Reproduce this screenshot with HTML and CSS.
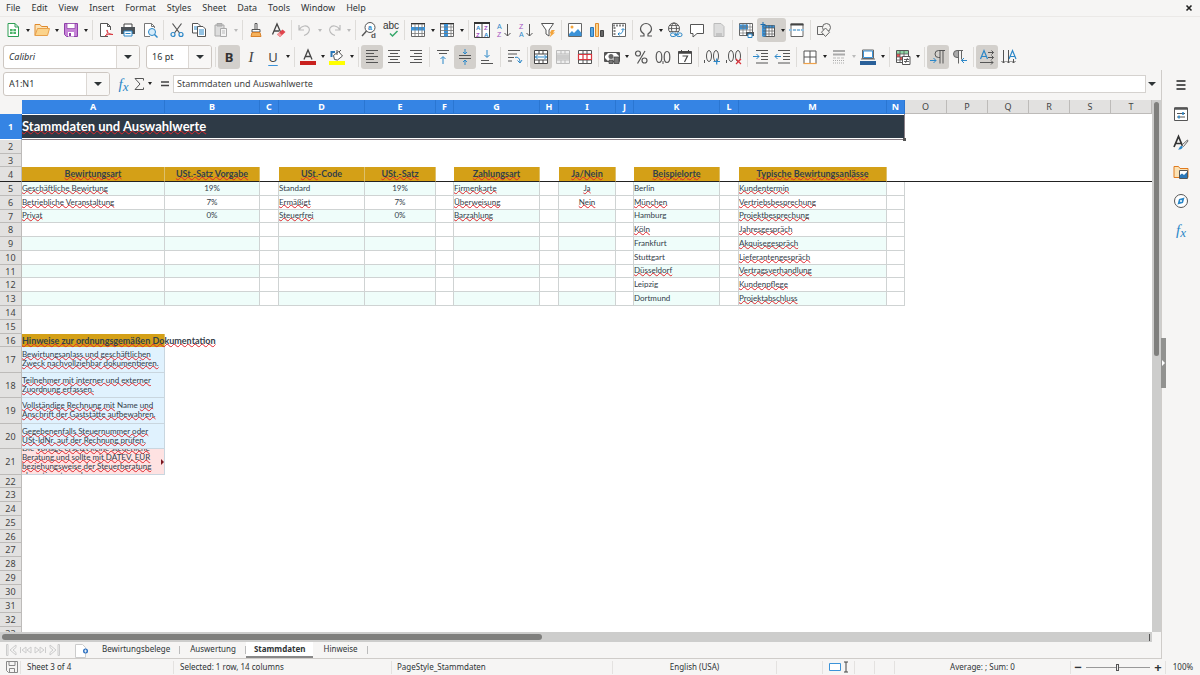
FILE: index.html
```html
<!DOCTYPE html>
<html lang="en">
<head>
<meta charset="utf-8">
<title>Stammdaten</title>
<link rel="stylesheet" href="styles.css">
</head>
<body>
<nav class="menubar">
  <button>File</button><button>Edit</button><button>View</button><button>Insert</button><button>Format</button><button>Styles</button><button>Sheet</button><button>Data</button><button>Tools</button><button>Window</button><button>Help</button>
  <button class="close" aria-label="Close"><svg viewBox="0 0 8 8" width="8" height="8"><path d="M1.500 1.500l5 5M6.500 1.500l-5 5" stroke="#222" stroke-width="1.600"/></svg></button>
</nav>

<div class="toolbar standard" role="toolbar" aria-label="Standard">
  <button class="tb" aria-label="New"><svg viewBox="0 0 16 16"><path d="M3 1.500h7l3.500 3.500v9.500H3z" fill="#fff" stroke="#2f9e55"/><path d="M10 1.500V5h3.500" stroke="#2f9e55"/><path d="M5 7h6v5H5z" fill="#4db56a"/><path d="M5 9.500h6M8 7v5" stroke="#fff" stroke-width=".7"/></svg></button><button class="dd" aria-label="New options"></button>
  <button class="tb" aria-label="Open"><svg viewBox="0 0 16 16"><path d="M1 13.500V2.500h5l1.500 2h6v3" fill="#fbe2b5" stroke="#e08a2c"/><path d="M1 13.500l2.500-7h12l-2 7z" fill="#fbd38b" stroke="#e8a04a"/></svg></button><button class="dd" aria-label="Open options"></button>
  <button class="tb" aria-label="Save"><svg viewBox="0 0 16 16"><path d="M1.500 1.500h13v13h-11l-2-2z" fill="#c583d6" stroke="#8e3fa8"/><path d="M4 1.500h8v5H4z" fill="#fff" stroke="#8e3fa8" stroke-width=".7"/><path d="M5 10h6v4.500H5z" fill="#fff"/><path d="M6 11h2v3H6z" fill="#8e3fa8"/></svg></button><button class="dd" aria-label="Save options"></button>
  <i class="sep wide"></i>
  <button class="tb" aria-label="Export as PDF"><svg viewBox="0 0 16 16"><path d="M10 14.500H2.500v-13h7l3 3V8M9.500 1.500v3h3" fill="#fff" stroke="#555"/><path d="M7 14c3-2 3-6 2-6s1 5 6 4.500c-3-1-6 0-8 1.500z" stroke="#d9363e"/></svg></button>
  <button class="tb" aria-label="Print"><svg viewBox="0 0 16 16"><path d="M4 5V2h8v3" fill="#fff" stroke="#444"/><path d="M1 5h14v7H1z" fill="#4d5358"/><path d="M4 9h8v5H4z" fill="#fff" stroke="#2b87c8"/><path d="M5.500 11.500h5" stroke="#2b87c8"/></svg></button>
  <button class="tb" aria-label="Print preview"><svg viewBox="0 0 16 16"><path d="M12.500 6V4.500l-3-3h-7v13H8M9.500 1.500v3h3" fill="#fff" stroke="#777"/><circle cx="10" cy="10" r="3.500" fill="#d6ecfa" stroke="#2b87c8"/><path d="M12.500 12.500l3 3" stroke="#2b87c8" stroke-width="1.400"/></svg></button>
  <i class="sep"></i>
  <button class="tb" aria-label="Cut"><svg viewBox="0 0 16 16"><path d="M3.500 1.500l7 9.500M12.500 1.500l-7 9.500" stroke="#555" stroke-width="1.200"/><circle cx="4" cy="12.500" r="2" stroke="#2b87c8" stroke-width="1.200"/><circle cx="12" cy="12.500" r="2" stroke="#2b87c8" stroke-width="1.200"/></svg></button>
  <button class="tb" aria-label="Copy"><svg viewBox="0 0 16 16"><path d="M1.500 1.500h5.500l2.500 2.500v7h-8z" fill="#fff" stroke="#555"/><path d="M3 5h4M3 7h4" stroke="#2b87c8"/><path d="M6.500 4.500H12l2.500 2.500v7.500h-8z" fill="#fff" stroke="#555"/><path d="M8 8h5M8 10h5M8 12h5" stroke="#2b87c8"/></svg></button>
  <button class="tb" aria-label="Paste" disabled><svg viewBox="0 0 16 16"><path d="M2 3h9v11H2z" fill="#ddd" stroke="#aaa"/><path d="M4 1.500h5v2.500H4z" fill="#bbb" stroke="#aaa"/><path d="M7.500 6.500h6v8h-6z" fill="#f4f4f4" stroke="#aaa"/><path d="M9 9h3M9 11h3" stroke="#bbb"/></svg></button><button class="dd" aria-label="Paste options" disabled></button>
  <i class="sep wide"></i>
  <button class="tb" aria-label="Clone formatting"><svg viewBox="0 0 16 16"><path d="M7 7.500v-6h2v6" fill="#fff" stroke="#555"/><path d="M4 7.500h8v2.500H4z" fill="#fff" stroke="#555"/><path d="M4 10.500h8l1 4H3z" fill="#f6b25c" stroke="#d9822b"/></svg></button>
  <button class="tb" aria-label="Clear formatting"><svg viewBox="0 0 16 16"><path d="M2.500 12.500L7 2l3.500 8M4 9h5" stroke="#444" stroke-width="1.300"/><path d="M7 12.500L12.500 7.500l3 2.500-5.500 5z" fill="#e0444c"/><path d="M7 12.500l2-2 3 2.500-2 2z" fill="#f49a9f"/></svg></button>
  <i class="sep"></i>
  <button class="tb" aria-label="Undo" disabled><svg viewBox="0 0 16 16"><path d="M2 3v5h5M2 8c3-5 8-5 10-2 1.500 3-1 6-5 7.500" stroke="#bbb" stroke-width="1.200"/></svg></button><button class="dd" aria-label="Undo options" disabled></button>
  <button class="tb" aria-label="Redo" disabled><svg viewBox="0 0 16 16"><path d="M14 3v5H9M14 8C11 3 6 3 4 6c-1.500 3 1 6 5 7.500" stroke="#bbb" stroke-width="1.200"/></svg></button><button class="dd" aria-label="Redo options" disabled></button>
  <i class="sep wide"></i>
  <button class="tb" aria-label="Find and replace"><svg viewBox="0 0 16 16"><circle cx="9" cy="5.500" r="5" fill="#fff" stroke="#555"/><path d="M5.500 9L1 14" stroke="#555" stroke-width="1.400"/><text x="7" y="7.500" font-size="7" font-weight="700" fill="#2b87c8">a</text><text x="10" y="15.500" font-size="8" font-weight="700" fill="#555">d</text></svg></button>
  <button class="tb" aria-label="Spelling"><svg viewBox="0 0 16 16"><text x="0" y="7" font-size="10" fill="#333">abc</text><path d="M7 11.500l2.500 2.500 5-5" stroke="#36a86b" stroke-width="1.500"/></svg></button>
  <i class="sep"></i>
  <button class="tb" aria-label="Row"><svg viewBox="0 0 16 16"><path d="M1.500 2h13v12.500h-13z" fill="#fff" stroke="#666"/><path d="M1 5h14v3.500H1z" fill="#3c93d8"/><path d="M5 2v12M8.500 2v12M12 2v12M2 11.500h12" stroke="#777" stroke-width=".8"/><path d="M1 1.500h14" stroke="#333"/></svg></button><button class="dd" aria-label="Row options"></button>
  <button class="tb" aria-label="Column"><svg viewBox="0 0 16 16"><path d="M1.500 2h13v12.500h-13z" fill="#fff" stroke="#666"/><path d="M5 2h4v12.500H5z" fill="#3c93d8"/><path d="M2 5h12M2 8.500h12M2 11.500h12M12 2v12" stroke="#777" stroke-width=".8"/><path d="M1 1.500h14" stroke="#333"/></svg></button><button class="dd" aria-label="Column options"></button>
  <i class="sep wide"></i>
  <button class="tb" aria-label="Sort"><svg viewBox="0 0 16 16"><path d="M.5 1.500h15v14H.5zM8 2v13" fill="#fff" stroke="#444"/><path d="M0 1h16" stroke="#333" stroke-width="2"/><g font-size="6" font-weight="700"><text x="2" y="7.500" fill="#2b87c8">A</text><text x="2" y="14.500" fill="#a24fc0">Z</text><text x="10" y="7.500" fill="#a24fc0">Z</text><text x="10" y="14.500" fill="#2b87c8">A</text></g></svg></button>
  <button class="tb" aria-label="Sort ascending"><svg viewBox="0 0 16 16"><g font-size="7"><text x="1" y="7" fill="#2b87c8" stroke="#2b87c8">A</text><text x="1" y="15" fill="#a24fc0">Z</text></g><path d="M11.500 2v12M8.500 11l3 3 3-3" stroke="#555"/></svg></button>
  <button class="tb" aria-label="Sort descending"><svg viewBox="0 0 16 16"><g font-size="7"><text x="1" y="7" fill="#a24fc0">Z</text><text x="1" y="15" fill="#2b87c8">A</text></g><path d="M11.500 2v12M8.500 11l3 3 3-3" stroke="#555"/></svg></button>
  <button class="tb" aria-label="AutoFilter"><svg viewBox="0 0 16 16"><path d="M1.500 1.500h12L9 8v6l-3-2V8z" fill="#fff" stroke="#555"/><path d="M11.500 8H15l-2 2.500h2L9.500 15.500l1.500-4H9.500z" fill="#f3a43b"/></svg></button>
  <i class="sep"></i>
  <button class="tb" aria-label="Insert image"><svg viewBox="0 0 16 16"><path d="M1.500 1.500h13v13h-13z" fill="#fff" stroke="#666"/><circle cx="5" cy="5" r="1.500" fill="#f3a43b"/><path d="M2 14v-2l3-3 2 2 4-4 3.500 4v3z" fill="#3c93d8"/></svg></button>
  <button class="tb" aria-label="Insert chart"><svg viewBox="0 0 16 16"><path d="M1.500 5.500h3v9h-3z" fill="#57a8e2" stroke="#2b77b8"/><path d="M6.500 1.500h3v13h-3z" fill="#fbd38b" stroke="#e08a2c"/><path d="M11.500 8.500h3v6h-3z" fill="#666" stroke="#444"/></svg></button>
  <button class="tb" aria-label="Insert pivot table"><svg viewBox="0 0 16 16"><path d="M1.500 1.500h13v13h-13z" fill="#fff" stroke="#666"/><path d="M2 3.500h12M3.500 5v9" stroke="#888" stroke-width="2" stroke-dasharray="2 1"/><path d="M7 12c4 0 5-2 5-5M10.500 8L12 6.500 13.500 8M8.500 10.500L7 12l1.500 1.500" stroke="#2b87c8"/></svg></button>
  <i class="sep"></i>
  <button class="tb" aria-label="Special character"><svg viewBox="0 0 16 16"><path d="M2 14h4v-2C3.500 10.500 2.500 8.500 2.500 7a5.500 5.500 0 0 1 11 0c0 1.500-1 3.500-3.500 5v2h4" stroke="#555" stroke-width="1.200"/></svg></button><button class="dd" aria-label="Special character options"></button>
  <button class="tb" aria-label="Insert hyperlink"><svg viewBox="0 0 16 16"><circle cx="7" cy="6.500" r="5.500" stroke="#555"/><ellipse cx="7" cy="6.500" rx="2.500" ry="5.500" stroke="#555"/><path d="M1.500 6.500h11M2.500 3.500h9M2.500 9.500h9" stroke="#555" stroke-width=".8"/><path d="M3 10.500h13v5H3z" fill="#f5f4f2"/><rect x="3.500" y="11" width="5.500" height="3.500" rx="1.700" stroke="#2b87c8"/><rect x="9.500" y="11" width="5.500" height="3.500" rx="1.700" stroke="#2b87c8"/><path d="M7 12.700h5" stroke="#2b87c8"/></svg></button>
  <button class="tb" aria-label="Insert comment"><svg viewBox="0 0 16 16"><path d="M1.500 2.500h13v9H8l-4 3.500v-3.500H1.500z" fill="#fff" stroke="#555"/></svg></button>
  <button class="tb" aria-label="Headers and footers" disabled><svg viewBox="0 0 16 16"><path d="M3 1.500h7l3 3v10H3z" fill="#ddd" stroke="#bbb"/><path d="M5 11h6v3H5z" fill="#c4c4c4"/></svg></button>
  <i class="sep"></i>
  <button class="tb" aria-label="Define print area"><svg viewBox="0 0 16 16"><path d="M1.500 1.500h13v12h-13z" fill="#fff" stroke="#666"/><path d="M1.500 2.500H10v5H1.500z" fill="#3c93d8"/><path d="M5 2v11M8.500 2v11M12 2v11M2 5h12M2 8h12M2 11h12" stroke="#777" stroke-width=".7"/><path d="M8 10h8v4H8z" fill="#4d5358"/><path d="M10 12h4v3.500h-4z" fill="#fff" stroke="#2b87c8"/></svg></button>
  <span class="split on"><button class="tb" aria-label="Freeze rows and columns"><svg viewBox="0 0 16 16"><path d="M3.500 3.500h11v11h-11z" fill="#fff" stroke="#555"/><path d="M2 3.500h12.500V6H6v8.500H2z" fill="#3c93d8"/><path d="M6 3v12M9 3v12M12 3v12M3 6h12M3 9h12M3 12h12" stroke="#555" stroke-width=".7"/><path d="M3 0v5M.5 2.500h5" stroke="#1b6fb3"/></svg></button><button class="dd" aria-label="Freeze options"></button></span>
  <button class="tb" aria-label="Split window"><svg viewBox="0 0 16 16"><path d="M2 7V2h12v5M2 9v5.500h12V9" fill="#fff" stroke="#666"/><path d="M1.500 2.500h13" stroke="#444" stroke-width="2"/><path d="M0 8h16" stroke="#2b87c8" stroke-dasharray="3 1"/></svg></button>
  <i class="sep"></i>
  <button class="tb" aria-label="Show draw functions"><svg viewBox="0 0 16 16"><path d="M1.500 4.500h8v8h-8z" fill="#f5f4f2" stroke="#666"/><circle cx="10.500" cy="5.500" r="4" fill="#f5f4f2" stroke="#666"/><path d="M9.500 6l4 4.200-4 4.300-4-4.300z" fill="#f5f4f2" stroke="#666"/></svg></button>
</div>

<div class="toolbar formatting" role="toolbar" aria-label="Formatting">
  <span class="combo font"><input aria-label="Font name" value="Calibri"><button aria-label="Font list"></button></span>
  <span class="combo size"><input aria-label="Font size" value="16 pt"><button aria-label="Size list"></button></span>
  <i class="sep wide"></i>
  <button class="tb on letter bold">B</button>
  <button class="tb letter italic">I</button>
  <button class="tb letter under">U</button><button class="dd" aria-label="Underline options"></button>
  <i class="sep wide"></i>
  <button class="tb" aria-label="Font color"><svg viewBox="0 0 16 16"><path d="M4 10.500L8 1l4 9.500M5.500 7.500h5" stroke="#444" stroke-width="1.300"/><path d="M0 12h16v4H0z" fill="#c9211e"/></svg></button><button class="dd" aria-label="Font color options"></button>
  <button class="tb" aria-label="Highlighting"><svg viewBox="0 0 16 16"><path d="M4.500 6.500l5-4 4 4.500-5 4-3-.5z" fill="#fff" stroke="#555"/><path d="M2.500 8V3H6" stroke="#2b77b8" stroke-width="2"/><path d="M8 1v5M12 1l-2 2" stroke="#555"/><path d="M0 12h16v4H0z" fill="#ff0"/></svg></button><button class="dd" aria-label="Highlighting options"></button>
  <i class="sep wide"></i>
  <button class="tb on" aria-label="Align left"><svg viewBox="0 0 16 16"><path d="M2 1.500h12M2 4.500h8M2 7.500h12M2 10.500h8M2 13.500h12" stroke="#555"/></svg></button>
  <button class="tb" aria-label="Center"><svg viewBox="0 0 16 16"><path d="M2 1.500h12M4 4.500h8M2 7.500h12M4 10.500h8M2 13.500h12" stroke="#555"/></svg></button>
  <button class="tb" aria-label="Align right"><svg viewBox="0 0 16 16"><path d="M2 1.500h12M6 4.500h8M2 7.500h12M6 10.500h8M2 13.500h12" stroke="#555"/></svg></button>
  <i class="sep"></i>
  <button class="tb" aria-label="Align top"><svg viewBox="0 0 16 16"><path d="M2 1.500h12M4 4.500h8" stroke="#555"/><path d="M8 15V8M5.500 10L8 7.500l2.500 2.500" stroke="#2b87c8"/></svg></button>
  <button class="tb on" aria-label="Center vertically"><svg viewBox="0 0 16 16"><path d="M2 6.500h12M2 9.500h12" stroke="#555"/><path d="M8 0v5M6 3l2 2 2-2M8 16v-5M6 13l2-2 2 2" stroke="#2b87c8"/></svg></button>
  <button class="tb" aria-label="Align bottom"><svg viewBox="0 0 16 16"><path d="M2 11.500h8M2 14.500h12" stroke="#555"/><path d="M8 1v7M5.500 6L8 8.500 10.500 6" stroke="#2b87c8"/></svg></button>
  <i class="sep"></i>
  <button class="tb" aria-label="Wrap text"><svg viewBox="0 0 16 16"><path d="M2 1.500h12M2 5h9M2 8.500h6M2 12h4" stroke="#555"/><path d="M9 8.500c3-1 5 1 5 5M11.500 11.500l2.500 2.500 2-3" stroke="#2b87c8"/></svg></button>
  <i class="sep"></i>
  <button class="tb on" aria-label="Merge and center"><svg viewBox="0 0 16 16"><path d="M1.500 1.500h13v13h-13zM1.500 5h13M1.500 11h13M6 2v3M10 2v3M6 11v3M10 11v3" fill="#fff" stroke="#444"/><path d="M2 8h12M4.500 6L2.500 8l2 2M11.500 6l2 2-2 2" stroke="#2b87c8"/></svg></button>
  <button class="tb" aria-label="Merge cells" disabled><svg viewBox="0 0 16 16"><path d="M1.500 1.500h13v13h-13zM1.500 5h13M1.500 11h13M6 2v3M10 2v3M6 11v3M10 11v3" fill="#eee" stroke="#bbb"/><path d="M2 6h12v4.500H2z" fill="#ccc"/></svg></button>
  <button class="tb" aria-label="Split cells"><svg viewBox="0 0 16 16"><path d="M1.500 1.500h13v13h-13zM1.500 5h13M1.500 11h13M6 2v3M10 2v3M6 11v3M10 11v3" fill="#fff" stroke="#555"/><path d="M1.500 5.500h13v5h-13zM6 5v6M10 5v6" stroke="#d9363e" stroke-width="1.200"/></svg></button>
  <i class="sep"></i>
  <button class="tb" aria-label="Format as currency"><svg viewBox="0 0 16 16"><path d="M.5 3.500h15v9H.5z" fill="#fff" stroke="#555"/><path d="M1 4l3 0-3 3zM15 4v3l-3-3zM1 12V9l3 3z" fill="#555"/><circle cx="7" cy="7.500" r="2.500" fill="#666"/><path d="M5 11h4v3.500H5zM10 8h5v6.500h-5z" fill="#777" stroke="#444" stroke-width=".8"/></svg></button><button class="dd" aria-label="Currency options"></button>
  <button class="tb" aria-label="Format as percent"><svg viewBox="0 0 16 16"><circle cx="5" cy="4.500" r="2.500" stroke="#555" stroke-width="1.200"/><circle cx="11.500" cy="11.500" r="2.500" stroke="#555" stroke-width="1.200"/><path d="M12 2L4.500 14.500" stroke="#555" stroke-width="1.200"/></svg></button>
  <button class="tb" aria-label="Format as number"><svg viewBox="0 0 16 16"><ellipse cx="4" cy="8" rx="2.800" ry="5.500" stroke="#555" stroke-width="1.200"/><ellipse cx="12" cy="8" rx="2.800" ry="5.500" stroke="#555" stroke-width="1.200"/><path d="M8 12v3" stroke="#555"/></svg></button>
  <button class="tb" aria-label="Format as date"><svg viewBox="0 0 16 16"><path d="M1.500 2.500h13v12h-13z" fill="#fff" stroke="#555"/><path d="M1.500 3.500h13" stroke="#444" stroke-width="2.500"/><path d="M4.500 1v2M11.500 1v2" stroke="#444"/><path d="M5.500 7h5l-3 6" stroke="#444" stroke-width="1.200"/></svg></button>
  <i class="sep"></i>
  <button class="tb" aria-label="Add decimal place"><svg viewBox="0 0 16 16"><path d="M.5 11v3" stroke="#555"/><ellipse cx="5" cy="7" rx="2.500" ry="5.500" stroke="#555"/><ellipse cx="12" cy="7" rx="2.500" ry="5.500" stroke="#555"/><path d="M9.500 12.500H16M12.700 9.500v6" stroke="#2b87c8" stroke-width="1.200"/></svg></button>
  <button class="tb" aria-label="Delete decimal place"><svg viewBox="0 0 16 16"><path d="M.5 11v3" stroke="#555"/><ellipse cx="5" cy="7" rx="2.500" ry="5.500" stroke="#555"/><ellipse cx="12" cy="7" rx="2.500" ry="5.500" stroke="#555"/><path d="M10 10l5 5M15 10l-5 5" stroke="#d9363e" stroke-width="1.200"/></svg></button>
  <i class="sep"></i>
  <button class="tb" aria-label="Increase indent"><svg viewBox="0 0 16 16"><path d="M3 1.500h12M8 4.500h7M8 7.500h7M8 10.500h7M3 14h12" stroke="#555"/><path d="M0 7.500h6M3.500 5L6 7.500 3.500 10" stroke="#2b87c8"/></svg></button>
  <button class="tb" aria-label="Decrease indent"><svg viewBox="0 0 16 16"><path d="M3 1.500h12M8 4.500h7M8 7.500h7M8 10.500h7M3 14h12" stroke="#555"/><path d="M0 7.500h6M2.500 5L0 7.500 2.500 10" stroke="#2b87c8"/></svg></button>
  <i class="sep"></i>
  <button class="tb" aria-label="Borders"><svg viewBox="0 0 16 16"><path d="M2 2h12v12.500H2z" fill="#fff" stroke="#555"/><path d="M8 2v12M2 8h12" stroke="#555"/><path d="M1.500 14.500h13" stroke="#f0a24a" stroke-width="1.200"/></svg></button><button class="dd" aria-label="Border options"></button>
  <button class="tb" aria-label="Border style" disabled><svg viewBox="0 0 16 16"><path d="M2 2h12M2 5.500h12" stroke="#aaa" stroke-width="2"/><path d="M2 9h12" stroke="#bbb" stroke-dasharray="3 1"/><path d="M2 11.500h12M2 14h12" stroke="#aaa" stroke-dasharray="1 1"/></svg></button><button class="dd" aria-label="Border style options" disabled></button>
  <button class="tb" aria-label="Border color"><svg viewBox="0 0 16 16"><path d="M2.500 1h11v8.500h-11z" fill="#fff" stroke="#666"/><path d="M3.500 2h9v6.500h-9z" stroke="#3c93d8"/><path d="M1 10h14" stroke="#666"/><path d="M0 12h16v4H0z" fill="#2a6099"/></svg></button><button class="dd" aria-label="Border color options"></button>
  <i class="sep wide"></i>
  <button class="tb" aria-label="Conditional formatting"><svg viewBox="0 0 16 16"><path d="M1.500 1.500h12v12h-12z" fill="#fff" stroke="#555"/><path d="M2 2h11v3H2z" fill="#8fd6a4"/><path d="M2 5h3v3H2zM5 8h3v3H5z" fill="#e55"/><path d="M5 2v11M9 2v11M2 5h12M2 8h12M2 11h6" stroke="#555" stroke-width=".8"/><path d="M7.500 7.500h7.500v8H7.500z" fill="#fff" stroke="#555"/><path d="M9 10.500h5M9 12.500h5M12.500 9l-2 5" stroke="#444" stroke-width=".8"/></svg></button><button class="dd" aria-label="Conditional options"></button>
  <i class="sep wide"></i>
  <button class="tb on" aria-label="Left to right"><svg viewBox="0 0 16 16"><path d="M15 1.500H8.500a3.500 3.500 0 0 0 0 7H10M10 1.500v13M13 1.500v13" stroke="#555"/><path d="M0 11.500h6M3.500 9L6 11.500 3.500 14" stroke="#2b87c8"/></svg></button>
  <button class="tb" aria-label="Right to left"><svg viewBox="0 0 16 16"><path d="M7 1.500H5a3.500 3.500 0 0 0 0 7h2z" fill="#aaa"/><path d="M11 1.500H5a3.500 3.500 0 0 0 0 7h1.500M6.500 1.500v13M9.500 1.500v9" stroke="#666"/><path d="M9.500 11.500H15M12 9l-2.500 2.500L12 14" stroke="#2b87c8"/></svg></button>
  <i class="sep"></i>
  <button class="tb on" aria-label="Text left to right"><svg viewBox="0 0 16 16"><path d="M1.500 10L5 1.500 8.500 10M2.700 7.500h4.600" stroke="#2b87c8" stroke-width="1.200"/><path d="M9 3.500h5.500M9 8.500h5.500M1 13.500h13M12.500 1.500l2 2-2 2M12.500 6.500l2 2-2 2M12 11.500l2 2-2 2" stroke="#555"/></svg></button>
  <button class="tb" aria-label="Text top to bottom"><svg viewBox="0 0 16 16"><path d="M8 10l3.500-8.500L15 10M9.200 7.500h4.600" stroke="#2b87c8" stroke-width="1.200"/><path d="M2.500 1v13M7.500 1v13M12.500 10v4M.5 12l2 2 2-2M5.500 12l2 2 2-2M10.500 12l2 2 2-2" stroke="#555"/></svg></button>
</div>

<div class="workspace">
  <main class="main">
    <div class="formulabar">
      <span class="combo namebox"><input aria-label="Name box" value="A1:N1"><button aria-label="Name list"></button></span>
      <button class="fb fx" aria-label="Function wizard">f<sub>x</sub></button>
      <button class="fb" aria-label="Select function"><svg viewBox="0 0 12 16" width="12" height="16"><path d="M10.500 4.500V2.500H2L7 8l-5 5.500h8.500v-2" stroke="#555"/></svg></button><button class="dd" aria-label="Function options"></button>
      <button class="fb eq" aria-label="Formula"><svg viewBox="0 0 10 8" width="10" height="8"><path d="M1 2h8M1 5.500h8" stroke="#444" stroke-width="1.400"/></svg></button>
      <input class="formula" aria-label="Formula input" value="Stammdaten und Auswahlwerte">
      <button class="arrow" aria-label="Expand formula bar"></button>
    </div>
    <div class="viewport">
      <div class="gridwrap">
        <table class="grid">
          <colgroup><col class="w22"><col class="w143"><col class="w95"><col class="w19"><col class="w86"><col class="w71"><col class="w18"><col class="w86"><col class="w19"><col class="w57"><col class="w18"><col class="w86"><col class="w19"><col class="w148"><col class="w18"><col class="w42"><col class="w41"><col class="w41"><col class="w41"><col class="w41"><col class="w41"></colgroup>
          <thead>
            <tr class="h14"><td class="corner"></td><th class="sel">A</th><th class="sel">B</th><th class="sel">C</th><th class="sel">D</th><th class="sel">E</th><th class="sel">F</th><th class="sel">G</th><th class="sel">H</th><th class="sel">I</th><th class="sel">J</th><th class="sel">K</th><th class="sel">L</th><th class="sel">M</th><th class="sel">N</th><th>O</th><th>P</th><th>Q</th><th>R</th><th>S</th><th>T</th></tr>
          </thead>
          <tbody>
            <tr class="h26"><th class="sel">1</th><td class="title" colspan="14"><span class="sp">Stammdaten und Auswahlwerte</span></td><td colspan="6"></td></tr>
            <tr class="h14"><th>2</th><td colspan="20"></td></tr>
            <tr class="h13"><th>3</th><td colspan="20"></td></tr>
            <tr class="h15 frozen"><th>4</th><td class="hd"><span class="sp">Bewirtungsart</span></td><td class="hd"><span class="sp">USt.-Satz Vorgabe</span></td><td></td><td class="hd"><span class="sp">USt.</span>-Code</td><td class="hd"><span class="sp">USt.-Satz</span></td><td></td><td class="hd"><span class="sp">Zahlungsart</span></td><td></td><td class="hd"><span class="sp">Ja/Nein</span></td><td></td><td class="hd"><span class="sp">Beispielorte</span></td><td></td><td class="hd"><span class="sp">Typische Bewirtungsanlässe</span></td><td></td><td colspan="6"></td></tr>
            <tr class="h14 data odd"><th>5</th><td><span class="sp">Geschäftliche Bewirtung</span></td><td>19%</td><td></td><td>Standard</td><td>19%</td><td></td><td><span class="sp">Firmenkarte</span></td><td></td><td><span class="sp">Ja</span></td><td></td><td>Berlin</td><td></td><td><span class="sp">Kundentermin</span></td><td></td></tr>
            <tr class="h14 data"><th>6</th><td><span class="sp">Betriebliche Veranstaltung</span></td><td>7%</td><td></td><td><span class="sp">Ermäßigt</span></td><td>7%</td><td></td><td><span class="sp">Überweisung</span></td><td></td><td><span class="sp">Nein</span></td><td></td><td><span class="sp">München</span></td><td></td><td><span class="sp">Vertriebsbesprechung</span></td><td></td></tr>
            <tr class="h13 data odd"><th>7</th><td><span class="sp">Privat</span></td><td>0%</td><td></td><td><span class="sp">Steuerfrei</span></td><td>0%</td><td></td><td><span class="sp">Barzahlung</span></td><td></td><td></td><td></td><td>Hamburg</td><td></td><td><span class="sp">Projektbesprechung</span></td><td></td></tr>
            <tr class="h14 data"><th>8</th><td></td><td></td><td></td><td></td><td></td><td></td><td></td><td></td><td></td><td></td><td><span class="sp">Köln</span></td><td></td><td><span class="sp">Jahresgespräch</span></td><td></td></tr>
            <tr class="h14 data odd"><th>9</th><td></td><td></td><td></td><td></td><td></td><td></td><td></td><td></td><td></td><td></td><td>Frankfurt</td><td></td><td><span class="sp">Akquisegespräch</span></td><td></td></tr>
            <tr class="h14 data"><th>10</th><td></td><td></td><td></td><td></td><td></td><td></td><td></td><td></td><td></td><td></td><td>Stuttgart</td><td></td><td><span class="sp">Lieferantengespräch</span></td><td></td></tr>
            <tr class="h13 data odd"><th>11</th><td></td><td></td><td></td><td></td><td></td><td></td><td></td><td></td><td></td><td></td><td><span class="sp">Düsseldorf</span></td><td></td><td><span class="sp">Vertragsverhandlung</span></td><td></td></tr>
            <tr class="h14 data"><th>12</th><td></td><td></td><td></td><td></td><td></td><td></td><td></td><td></td><td></td><td></td><td>Leipzig</td><td></td><td><span class="sp">Kundenpflege</span></td><td></td></tr>
            <tr class="h14 data odd"><th>13</th><td></td><td></td><td></td><td></td><td></td><td></td><td></td><td></td><td></td><td></td><td>Dortmund</td><td></td><td><span class="sp">Projektabschluss</span></td><td></td></tr>
            <tr class="h14"><th>14</th><td colspan="20"></td></tr>
            <tr class="h14"><th>15</th><td colspan="20"></td></tr>
            <tr class="h13"><th>16</th><td class="hd spill"><span class="sp">Hinweise zur ordnungsgemäßen Dokumentation</span></td></tr>
            <tr class="h26"><th>17</th><td class="note"><span class="sp">Bewirtungsanlass und geschäftlichen<br>Zweck nachvollziehbar dokumentieren.</span></td></tr>
            <tr class="h25"><th>18</th><td class="note"><span class="sp">Teilnehmer mit interner und externer<br>Zuordnung erfassen.</span></td></tr>
            <tr class="h26"><th>19</th><td class="note"><span class="sp">Vollständige Rechnung mit</span> Name <span class="sp">und<br>Anschrift der Gaststätte aufbewahren.</span></td></tr>
            <tr class="h25"><th>20</th><td class="note"><span class="sp">Gegebenenfalls Steuernummer oder<br>USt-IdNr. auf der Rechnung prüfen.</span></td></tr>
            <tr class="h26"><th>21</th><td class="note warn"><div class="clip"><p>Die <span class="sp">Vorlage ersetzt keine steuerliche<br>Beratung und sollte mit DATEV, EÜR<br>beziehungsweise der Steuerberatung<br>abgestimmt werden.</span></p></div></td></tr>
            <tr class="h13"><th>22</th></tr>
            <tr class="h14"><th>23</th></tr>
            <tr class="h14"><th>24</th></tr>
            <tr class="h14"><th>25</th></tr>
            <tr class="h13"><th>26</th></tr>
            <tr class="h14"><th>27</th></tr>
            <tr class="h14"><th>28</th></tr>
            <tr class="h14"><th>29</th></tr>
            <tr class="h14"><th>30</th></tr>
            <tr class="h14"><th>31</th></tr>
            <tr class="h14"><th>32</th></tr>
            <tr class="h14"><th>33</th></tr>
          </tbody>
        </table>
      </div>
      <div class="vscroll"><div class="thumb"></div></div>
      <div class="hscroll"><div class="thumb"></div></div>
    </div>
    <div class="tabs">
      <span class="tabnav">
        <button aria-label="First sheet"><svg viewBox="0 0 14 14" width="14" height="14"><path d="M1.500 1.500h1.500v11H1.500zM11 2L5 7l6 5V9.500L8 7l3-2.500z" stroke="#ccc"/></svg></button>
        <button aria-label="Previous sheet"><svg viewBox="0 0 14 14" width="14" height="14"><path d="M1.500 4v6M7 4L3 7l4 3zM12 4L8 7l4 3z" stroke="#ccc"/></svg></button>
        <button aria-label="Next sheet"><svg viewBox="0 0 14 14" width="14" height="14"><path d="M2 4l4 3-4 3zM7 4l4 3-4 3zM12.500 4v6" stroke="#ccc"/></svg></button>
        <button aria-label="Last sheet"><svg viewBox="0 0 14 14" width="14" height="14"><path d="M11 1.500h1.500v11H11zM3 2l6 5-6 5V9.500L6 7 3 4.500z" stroke="#ccc"/></svg></button>
      </span>
      <button class="addsheet" aria-label="Add sheet"><svg viewBox="0 0 14 14" width="14" height="14"><path d="M.5 .5h7l3 3v10H.5z" fill="#fff" stroke="#ccc"/><circle cx="10.500" cy="7" r="2.500" fill="#2a6fc0"/><path d="M9 7h3M10.500 5.500v3" stroke="#fff" stroke-width=".8"/></svg></button>
      <button class="tab">Bewirtungsbelege</button><button class="tab">Auswertung</button><button class="tab active">Stammdaten</button><button class="tab">Hinweise</button>
    </div>
  </main>
  <aside class="sidebar">
    <button aria-label="Sidebar settings"><svg viewBox="0 0 16 16"><path d="M3.500 4h9M3.500 8h9M3.500 12h9" stroke="#222" stroke-width="1.400"/></svg></button>
    <button aria-label="Properties"><svg viewBox="0 0 16 16"><path d="M1.500 2h13v12.500h-13z" fill="#fff" stroke="#555"/><path d="M1.500 2.500h13" stroke="#555" stroke-width="2.500"/><path d="M4 7.500h8M4 11h8" stroke="#555"/><path d="M10 6v3M6 9.500v3" stroke="#2b87c8" stroke-width="1.500"/></svg></button>
    <button aria-label="Styles"><svg viewBox="0 0 16 16"><path d="M1 12L5.500 1.500 9.500 11M2.500 8.500h6" stroke="#333" stroke-width="1.700"/><path d="M14.500 5L9 10l1.500 1.500L15 6z" fill="#fff" stroke="#666"/><path d="M4 14.500c3 0 2-4 5-3.500 2 1 0 4-5 3.500z" fill="#2b87c8"/></svg></button>
    <button aria-label="Gallery"><svg viewBox="0 0 16 16"><path d="M1 13.500V2.500h4.500l1.500 2h8v9z" fill="#fbe2b5" stroke="#e07b1f"/><path d="M6.500 6.500h8v8h-8z" fill="#fff" stroke="#555"/><path d="M7 14v-3l2-1.500 2 1.500 3-3v6z" fill="#2b77b8"/></svg></button>
    <button aria-label="Navigator"><svg viewBox="0 0 16 16"><circle cx="8" cy="8" r="6.500" fill="#fff" stroke="#555"/><path d="M11.500 4.500l-1.500 5.500-5.500 1.500L6 6z" fill="#2b87c8"/><circle cx="8" cy="8" r="1" fill="#fff"/></svg></button>
    <button class="fx" aria-label="Functions">f<sub>x</sub></button>
    <button class="handle" aria-label="Hide sidebar"></button>
  </aside>
</div>

<footer class="status">
  <span class="s-doc"><svg viewBox="0 0 12 12" width="12" height="12"><path d="M.5 .5h11v11h-9l-2-2zM3 .5v4h6v-4M3.500 11.500v-4h5v4" stroke="#888"/></svg></span>
  <span class="s-sheet">Sheet 3 of 4</span>
  <span class="s-sel">Selected: 1 row, 14 columns</span>
  <span class="s-page">PageStyle_Stammdaten</span>
  <span class="s-lang">English (USA)</span>
  <span class="s-mode"></span>
  <span class="s-box"><svg viewBox="0 0 20 12" width="20" height="12"><path d="M.5 2.500h11v7H.5z" fill="#fff" stroke="#3c93d8"/><path d="M15 1h4M17 1v10M15 11h4" stroke="#444"/></svg></span>
  <span class="s-gap"></span>
  <span class="s-gap"></span>
  <span class="s-sum">Average: ; Sum: 0</span>
  <span class="s-zoom"><button aria-label="Zoom out">−</button><input type="range" aria-label="Zoom" min="0" max="100" value="49"><button aria-label="Zoom in">+</button></span>
  <span class="s-pct">100%</span>
</footer>
</body>
</html>
```
FILE: styles.css
```css
* { box-sizing: border-box; }
body {
  margin: 0;
  height: 100vh;
  display: flex;
  flex-direction: column;
  overflow: hidden;
  background: #f6f5f4;
  color: #2e3436;
  font: 9px/12px "Noto Sans", "Open Sans", sans-serif;
}
button, input { font: inherit; color: inherit; margin: 0; padding: 0; border: 0; background: none; }
svg { display: block; fill: none; overflow: visible; }
svg text { font-family: "Liberation Sans", sans-serif; stroke: none; }

.menubar { display: flex; flex: none; align-items: center; height: 17px; padding: 0 7px 0 6px; gap: 11px; border-bottom: 1px solid #ebe9e7; }
.close { margin-left: auto; }

.toolbar { display: flex; align-items: center; height: 27px; flex: none; }
.standard { padding-left: 2px; height: 26px; }
.formatting { padding-left: 3px; }
.tb { flex: none; width: 22px; height: 24px; display: flex; align-items: center; justify-content: center; border-radius: 3px; }
.tb svg { width: 16px; height: 16px; }
.on { background: #d3d0cc; }
.split { display: flex; align-items: center; border-radius: 3px; }
.dd { flex: none; width: 7px; height: 24px; display: flex; align-items: center; justify-content: center; }
.dd::before { content: ""; border: 2px solid transparent; border-top: 3px solid #222; border-bottom: 0; }
.dd:disabled::before { border-top-color: #bbb; }
.sep { flex: none; width: 5px; height: 20px; background: linear-gradient(#dedcd9, #dedcd9) center / 1px 100% no-repeat; }
.wide { width: 6px; }
.letter { font-size: 13px; color: #444; }
.bold { font-weight: 700; color: #333; }
.italic { font-family: "Liberation Serif", serif; font-style: italic; font-size: 15px; }
.under { text-decoration: underline #3c93d8 1px; text-underline-offset: 3px; }

.combo { display: flex; flex: none; height: 24px; border: 1px solid #cdc7c2; border-radius: 3px; background: #fff; overflow: hidden; }
.combo input { flex: 1; min-width: 0; padding-left: 5px; }
.combo button { width: 23px; border-left: 1px solid #dcd8d4; background: #f8f7f6; display: flex; align-items: center; justify-content: center; }
.combo button::before, .arrow::before { content: ""; border: 4px solid transparent; border-top-color: #2e3436; border-bottom: 0; }
.font { width: 137px; margin-right: 6px; }
.font input { font-style: italic; }
.size { width: 66px; }

.workspace { flex: 1; display: flex; min-height: 0; }
.main { flex: 1; min-width: 0; display: flex; flex-direction: column; }
.formulabar { flex: none; height: 30px; padding: 1px 4px 4px 3px; display: flex; align-items: center; }
.namebox { width: 107px; margin-right: 6px; }
.fb { width: 15px; display: flex; justify-content: center; align-items: center; }
.fx { font: italic 15px/16px "Liberation Serif", serif; color: #2b87c8; display: block; }
.fx sub { font-size: 13px; line-height: 1px; vertical-align: -2px; }
.eq { margin: 0 1px 0 4px; }
.formula { flex: 1; min-width: 0; height: 18px; border: 1px solid #d5d2cf; background: #fff; padding: 0 4px 0 3px; color: #444; }
.arrow { width: 11px; display: flex; justify-content: center; }

.viewport { flex: 1; min-height: 0; display: grid; grid-template-columns: minmax(0, 1fr) 9px; grid-template-rows: minmax(0, 1fr) 10px; }
.gridwrap { overflow: hidden; background: #fff; }
.grid { width: 1152px; table-layout: fixed; border-collapse: separate; border-spacing: 0; font: 8px/9px Lato, sans-serif; color: #33404a; }
.grid th { padding: 0; background: #e2e1e0; border: solid #bdbbb9; border-width: 0 1px 1px 0; font: 9px/11px "Noto Sans", sans-serif; color: #444; text-align: center; }
.grid th.sel { background: #3584e4; border-color: #2a76d2; color: #fff; font-weight: 700; }
.grid tbody th.sel { border-bottom-color: #fff; }
.grid td { padding: 0 0 1px; white-space: nowrap; overflow: hidden; }
.grid .corner { background: #f6f5f4; }
.w18 { width: 18px; } .w19 { width: 19px; } .w22 { width: 22px; } .w41 { width: 41px; } .w42 { width: 42px; }
.w57 { width: 57px; } .w71 { width: 71px; } .w86 { width: 86px; } .w95 { width: 95px; } .w143 { width: 143px; } .w148 { width: 148px; }
.h13 { height: 13px; } .h14 { height: 14px; } .h15 { height: 15px; } .h25 { height: 25px; } .h26 { height: 26px; }
.grid .title { position: relative; overflow: visible; background: #2e3a46; color: #fff; font-size: 13px; line-height: 18px; font-weight: 700; border: solid #8a7f86; border-width: 0 1px 1px 0; box-shadow: inset 0 -1px #fff, inset 0 1px #fff; }
.title::after { content: ""; position: absolute; right: -2px; bottom: -2px; width: 3px; height: 3px; background: #555; }
.grid .hd { background: #d4a017; border-right: 1px solid #ddc06b; text-align: center; font-size: 9px; font-weight: 700; }
.grid .spill { text-align: left; overflow: visible; }
.frozen > * { border-bottom: 1px solid #222 !important; }
.data td { border: solid #cfd3d3; border-width: 0 1px 1px 0; }
.data td:nth-of-type(2), .data td:nth-of-type(5), .data td:nth-of-type(9) { text-align: center; }
.odd td { background: #effdfa; }
.odd td:nth-of-type(3), .odd td:nth-of-type(6), .odd td:nth-of-type(8), .odd td:nth-of-type(10), .odd td:nth-of-type(12), .odd td:nth-of-type(14) { background: #fff; }
.grid .note { background: #e0f2fe; border: solid #c9d6df; border-width: 0 1px 1px 0; }
.grid .warn { background: #fee2e2; padding: 0; }
.clip { height: 25px; display: flex; align-items: center; overflow: hidden; position: relative; }
.clip p { margin: 0; flex: none; }
.clip::after { content: ""; position: absolute; right: 0; top: 10px; border: 3px solid transparent; border-left-color: #7a1620; border-right: 0; }
.sp { text-decoration: underline wavy #e0262c 1px; text-underline-offset: -1px; text-decoration-skip-ink: none; }

.vscroll { background: #cdcdcc; padding: 2px 2px 0; }
.vscroll .thumb { height: 48%; border-radius: 3px; background: #7f7f7d; }
.hscroll { background: linear-gradient(#555, #555) right 2px center / 1px 7px no-repeat #cdcdcc; padding: 2px; }
.hscroll .thumb { width: 47%; height: 6px; border-radius: 3px; background: #7f7f7d; }

.tabs { flex: none; height: 17px; display: flex; align-items: stretch; font-size: 8px; border-bottom: 1px solid #cfccc9; }
.tabnav { display: flex; align-items: center; padding-left: 5px; width: 74px; }
.addsheet { flex: none; width: 18px; padding: 1px 0 0 1px; }
.tab { position: relative; padding: 0 10px; border-bottom: 2px solid transparent; }
.tab::after { content: ""; position: absolute; right: 0; top: 4px; height: 8px; border-right: 1px solid #bbb; }
.tab.active { background: #fff; font-weight: 700; padding: 0 8px; border-bottom-color: #888; }
.tab.active::after { display: none; }

.sidebar { position: relative; width: 39px; border-left: 1px solid #cfccc9; display: flex; flex-direction: column; align-items: center; padding-top: 7px; gap: 13px; }
.sidebar button { height: 16px; }
.sidebar button svg { width: 16px; height: 16px; }
.sidebar .handle { position: absolute; left: -1px; top: 268px; width: 5px; height: 50px; background: #929290; }
.handle::before { content: ""; display: block; width: 0; margin-left: 1px; border: 3px solid transparent; border-left-color: #fff; border-right: 0; }

.status { flex: none; height: 16px; display: flex; align-items: center; font-size: 8px; }
.status > span { border-right: 1px solid #e4e2e0; height: 13px; display: flex; align-items: center; }
.status .s-doc { width: 21px; padding-left: 6px; }
.status .s-sheet { width: 153px; padding-left: 6px; }
.status .s-sel { width: 218px; padding-left: 6px; }
.status .s-page { width: 221px; padding-left: 5px; }
.status .s-lang { width: 164px; justify-content: center; }
.status .s-mode { width: 46px; }
.status .s-box { width: 32px; justify-content: flex-end; padding-right: 5px; }
.status .s-gap { width: 20px; }
.status .s-sum { flex: 1; justify-content: center; }
.s-zoom { width: 95px; gap: 4px; justify-content: center; }
.s-zoom button { width: 8px; font-size: 13px; font-weight: 700; line-height: 12px; }
.s-zoom input { width: 64px; height: 12px; appearance: none; background: linear-gradient(#999, #999) center / 100% 1px no-repeat; }
.s-zoom input::-webkit-slider-thumb { appearance: none; width: 3px; height: 7px; border: 1px solid #555; background: #eee; }
.status .s-pct { width: 34px; border: 0; justify-content: center; }
```
